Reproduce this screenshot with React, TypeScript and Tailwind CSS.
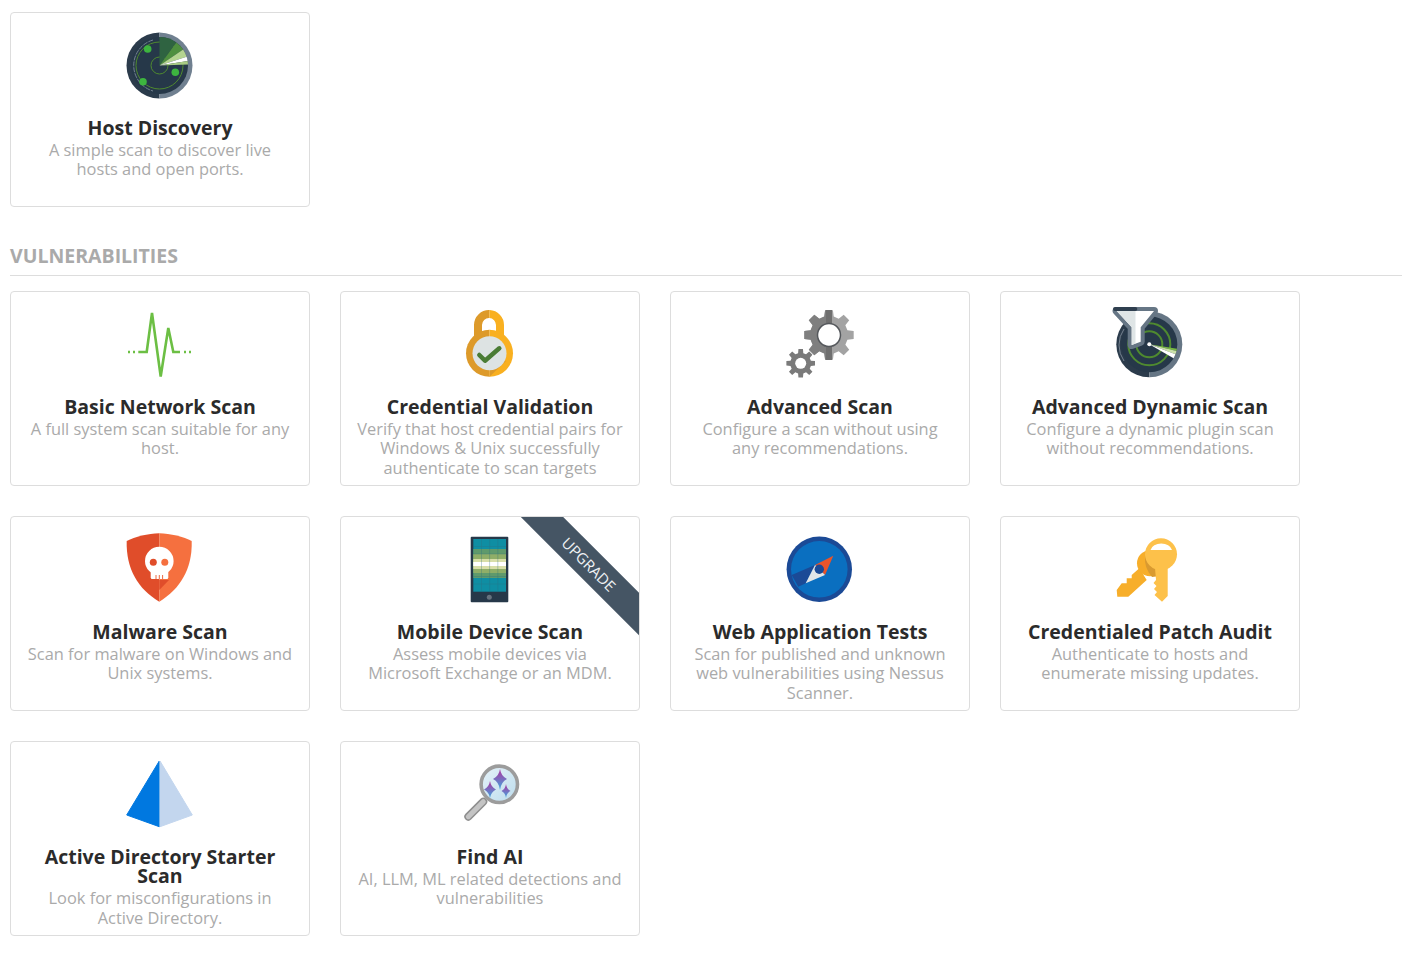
import type { ReactNode } from 'react';

// polar helpers for the radar wedges and gears, angle 0 is straight up
const pt = (cx: number, cy: number, r: number, deg: number) => {
  const a = (deg * Math.PI) / 180;
  return `${(cx + r * Math.sin(a)).toFixed(2)} ${(cy - r * Math.cos(a)).toFixed(2)}`;
};

const wedge = (cx: number, cy: number, r: number, a1: number, a2: number) =>
  `M${cx} ${cy}L${pt(cx, cy, r, a1)}A${r} ${r} 0 0 1 ${pt(cx, cy, r, a2)}Z`;

const gear = (cx: number, cy: number, ro: number, ri: number, teeth: number) => {
  const step = 360 / teeth;
  let d = '';
  for (let i = 0; i < teeth; i++) {
    const a = i * step;
    d += `${i === 0 ? 'M' : 'L'}${pt(cx, cy, ri, a - step * 0.32)}L${pt(cx, cy, ro, a - step * 0.2)}L${pt(cx, cy, ro, a + step * 0.2)}L${pt(cx, cy, ri, a + step * 0.32)}`;
  }
  return d + 'Z';
};

const HostIcon = () => (
  <>
    <path d="M39.5 2.5a33 33 0 0 0 0 66z" fill="#2b3b4b" />
    <path d="M39.5 2.5a33 33 0 0 1 0 66z" fill="#708090" />
    <circle cx="39.5" cy="35.5" r="28.5" fill="#263849" />
    <circle cx="39.5" cy="35.5" r="23.5" fill="none" stroke="#4f8a2f" strokeWidth="1" />
    <circle cx="39.5" cy="35.5" r="8.5" fill="none" stroke="#4f8a2f" strokeWidth="1" />
    <path d={wedge(39.5, 35.5, 28.5, 0, 36)} fill="#2f6341" />
    <path d={wedge(39.5, 35.5, 28.5, 36, 56)} fill="#4f8f3f" />
    <path d={wedge(39.5, 35.5, 28.5, 56, 72)} fill="#b5d490" />
    <path d={wedge(39.5, 35.5, 28.5, 72, 81)} fill="#ffffff" />
    <path d={wedge(39.5, 35.5, 28.5, 81, 88)} fill="#a9cc84" />
    <path d="M33 10a26.5 26.5 0 0 0 0 51" fill="none" stroke="#93a1ad" strokeWidth="0.7" strokeDasharray="5 1" />
    <circle cx="27.7" cy="19" r="3.8" fill="#3db53f" />
    <circle cx="55.3" cy="42.3" r="3.8" fill="#3db53f" />
    <circle cx="23" cy="51.7" r="3.8" fill="#3db53f" />
  </>
);

const PulseIcon = () => (
  <>
    <path d="M18.3 43H26.7L32 4L40.7 67.5L48.3 19L53.3 43H60" fill="none" stroke="#6cbf44" strokeWidth="2.6" />
    <path d="M8 43h2M13 43h2M64 43h2M69 43h2" fill="none" stroke="#6cbf44" strokeWidth="2.4" />
  </>
);

const LockIcon = () => (
  <>
    <path d="M28 30V16a11 11 0 0 1 11.5-11" fill="none" stroke="#dd9a2a" strokeWidth="8" />
    <path d="M39.5 5a11 11 0 0 1 10.5 11V30" fill="none" stroke="#f9b020" strokeWidth="8" />
    <path d="M39.5 20.8a23.5 23.5 0 0 0 0 47z" fill="#dd9a2a" />
    <path d="M39.5 20.8a23.5 23.5 0 0 1 0 47z" fill="#f9b020" />
    <path d="M39.5 67.8L56 52L39.5 50z" fill="#dd9a2a" />
    <circle cx="39.5" cy="44.3" r="17" fill="#dde3e3" />
    <path d="M29.3 46L35 51.7L49.3 39.3" fill="none" stroke="#4a7c35" strokeWidth="4.5" strokeLinecap="round" strokeLinejoin="round" />
  </>
);

const GearsIcon = () => (
  <>
    <clipPath id="gear-left">
      <rect x="0" y="0" width="49" height="72" />
    </clipPath>
    <path d={gear(49, 26, 25, 19, 8)} fill="#a3a3a3" />
    <path d={gear(49, 26, 25, 19, 8)} fill="#7f7f7f" clipPath="url(#gear-left)" />
    <rect x="46" y="1" width="6" height="14" fill="#6f6f6f" />
    <rect x="46" y="37" width="6" height="14" fill="#6f6f6f" />
    <circle cx="49" cy="26" r="11.5" fill="#fff" stroke="#55585c" strokeWidth="1.5" />
    <path d={gear(20.7, 54.3, 14.5, 10.5, 8)} fill="#7a7a7a" />
    <circle cx="20.7" cy="54.3" r="5.5" fill="#fff" />
  </>
);

const DynamicIcon = () => (
  <>
    <path d="M39.3 2.3a33 33 0 0 0 0 66z" fill="#2b3b4b" />
    <path d="M39.3 2.3a33 33 0 0 1 0 66z" fill="#667685" />
    <circle cx="39.3" cy="35.3" r="28" fill="#263849" />
    <circle cx="39.3" cy="35.3" r="13" fill="none" stroke="#4f8a2f" strokeWidth="2" />
    <circle cx="39.3" cy="35.3" r="21" fill="none" stroke="#4f8a2f" strokeWidth="2" />
    <path d={wedge(39.3, 35.3, 28, 99, 104)} fill="#78b843" />
    <path d={wedge(39.3, 35.3, 28, 104, 111)} fill="#c9e0a8" />
    <path d={wedge(39.3, 35.3, 28, 111, 120)} fill="#ffffff" />
    <circle cx="39.3" cy="35.3" r="2" fill="#fff" />
    <path d="M14 20a28 28 0 0 0 0 32" fill="none" stroke="#93a1ad" strokeWidth="0.7" />
    <path d="M6.7 2H44L30.7 18.3V32.7L21.7 36V18.3z" fill="#667685" stroke="#667685" strokeWidth="8" strokeLinejoin="round" />
    <path d="M5 0H25.3" stroke="#2f3f4f" strokeWidth="4" strokeLinecap="round" />
    <path d="M6.7 2H44L30.7 18.3V32.7L21.7 36V18.3z" fill="#ffffff" />
    <path d="M6.7 2H25.5V34.4L21.7 36V18.3z" fill="#dfe5e6" />
  </>
);

const ShieldIcon = () => (
  <>
    <path d="M39.3 -.7C28 -.7 15 3 6.7 7C6 35 18 55 39.3 67.7z" fill="#e04d2a" />
    <path d="M39.3 -.7C50 -.7 64 3 71.7 7C72.5 35 60 55 39.3 67.7z" fill="#f5703f" />
    <path d="M39.3 56V46H49z" fill="#e04d2a" />
    <circle cx="39.3" cy="27" r="14.3" fill="#fff" />
    <rect x="30.7" y="34" width="17.6" height="11" rx="1.5" fill="#fff" />
    <circle cx="33.3" cy="28.3" r="3.5" fill="#e04d2a" />
    <circle cx="44.8" cy="28.3" r="3.5" fill="#f5703f" />
    <path d="M36 41v4M39.3 41v4M42.6 41v4" stroke="#e8592f" strokeWidth="0.9" />
  </>
);

const PhoneIcon = () => (
  <>
    <rect x="20.7" y="2.7" width="37.6" height="65.6" rx="1" fill="#263849" />
    <rect x="23.3" y="5" width="32.7" height="52.7" fill="#0f8ea3" />
    <rect x="23.3" y="15" width="32.7" height="29" fill="#5f9a6c" />
    <rect x="23.3" y="20" width="32.7" height="19" fill="#8fae68" />
    <rect x="23.3" y="25" width="32.7" height="10" fill="#d8dea8" />
    <rect x="23.3" y="28" width="32.7" height="4" fill="#ffffff" />
    <path d="M31.5 5V57.7M39.6 5V57.7M47.8 5V57.7M23.3 12.5H56M23.3 20H56M23.3 42.5H56M23.3 50H56" stroke="#2f6f80" strokeWidth="0.5" opacity="0.6" />
    <circle cx="39.3" cy="63.3" r="2.5" fill="#66727e" />
  </>
);

const CompassIcon = () => (
  <>
    <circle cx="39.3" cy="35.3" r="32.7" fill="#1b4a96" />
    <circle cx="39.3" cy="35.3" r="28.3" fill="#0a6fc0" />
    <path d="M35 31L11.7 41L18.3 52.7L25.7 49.3z" fill="#1b4a96" />
    <path d="M53.3 21.7L35 31L45 41z" fill="#e8542a" />
    <path d="M25.7 49.3L35 31L45 41z" fill="#e3e6e8" />
    <circle cx="39.3" cy="35.3" r="4.7" fill="#1b4a96" />
  </>
);

const KeysIcon = () => (
  <>
    <path d="M29.3 34.3L21.7 41V44.3H16.7V49.3H11.7L6.7 56L7.3 62.7H18.3L36.7 46z" fill="#f7ae2a" />
    <circle cx="40" cy="29.3" r="13" fill="#f7ae2a" />
    <path d="M35 22a13 13 0 0 1 10 0L50 42L42 43Q34 34 35 22z" fill="#d99a30" />
    <path d="M45 34H57.7V62L52 67.7L44.5 61L47 58L44 55L46.5 52L43.5 49L46 46z" fill="#fdc14a" />
    <circle cx="51" cy="20.3" r="16" fill="#fdc14a" />
    <path d="M40.5 16a11 8.2 0 0 1 21.5 0z" fill="#fff" />
  </>
);

const PyramidIcon = () => (
  <>
    <path d="M39.3 2L6.7 56L39.3 67.7z" fill="#0078e0" stroke="#0078e0" strokeWidth="1" strokeLinejoin="round" />
    <path d="M40 2L72.3 56L40 67.7z" fill="#c3d6ee" stroke="#c3d6ee" strokeWidth="1" strokeLinejoin="round" />
  </>
);

const SparkIcon = () => (
  <>
    <defs>
      <linearGradient id="spark" x1="0" y1="0" x2="0" y2="1">
        <stop offset="0" stopColor="#b0339f" />
        <stop offset="1" stopColor="#3fa9e0" />
      </linearGradient>
      <linearGradient id="lens" x1="0" y1="0" x2="1" y2="1">
        <stop offset="0" stopColor="#e6f2f9" />
        <stop offset="1" stopColor="#bcdcec" />
      </linearGradient>
    </defs>
    <path d="M33.3 42.7L18.3 57.7" stroke="#8f8f8f" strokeWidth="8" strokeLinecap="round" />
    <path d="M33.3 42.7L18.3 57.7" stroke="#c4c4c4" strokeWidth="5" strokeLinecap="round" />
    <circle cx="49.3" cy="25.3" r="18.2" fill="url(#lens)" stroke="#9c9c9c" strokeWidth="3.6" />
    <path d="M50 10Q51 17 57 20Q51 23 50 31Q49 23 43 20Q49 17 50 10z" fill="url(#spark)" />
    <path d="M40 22Q41 28 46 30.5Q41 33 40 39Q39 33 34 30.5Q39 28 40 22z" fill="url(#spark)" />
    <path d="M56 25Q56.6 30 60.5 32Q56.6 34 56 39Q55.4 34 51.5 32Q55.4 30 56 25z" fill="url(#spark)" />
  </>
);

function ScanCard({ icon, title, desc, upgrade }: { icon: ReactNode; title: string; desc: string; upgrade?: boolean }) {
  return (
    <div className="relative h-[195px] w-[300px] overflow-hidden rounded-[4px] border border-[#dddddd] bg-white px-[15.75px] pt-[17px] text-center">
      {upgrade && (
        <div className="absolute left-[148px] top-[32px] flex h-[30px] w-[200px] rotate-45 items-center justify-center bg-[#455564] text-[15px] text-[#eef1f3]">
          UPGRADE
        </div>
      )}
      <svg viewBox="0 0 80 72" className="relative mx-auto block h-[72px] w-[80px] overflow-visible">
        {icon}
      </svg>
      <div className="relative mt-[15.6px] text-[19.5px] font-bold leading-[19.5px] text-[#2b2b2b]">{title}</div>
      <div className="relative mt-[2.5px] text-[16.4px] leading-[19.5px] text-[#aaaaaa]">{desc}</div>
    </div>
  );
}

export default function App() {
  return (
    <div className="min-h-screen bg-white pt-[12px] pl-[10px] font-['Open_Sans',sans-serif]">
      <ScanCard
        icon={<HostIcon />}
        title="Host Discovery"
        desc="A simple scan to discover live hosts and open ports."
      />

      <div className="mt-[37px] border-b border-[#dddddd] pb-[7px] text-[19.5px] font-bold leading-[24px] text-[#aaaaaa]">
        VULNERABILITIES
      </div>

      <div className="mt-[15px] grid grid-cols-[repeat(4,300px)] gap-[30px]">
        <ScanCard icon={<PulseIcon />} title="Basic Network Scan" desc="A full system scan suitable for any host." />
        <ScanCard
          icon={<LockIcon />}
          title="Credential Validation"
          desc="Verify that host credential pairs for Windows & Unix successfully authenticate to scan targets"
        />
        <ScanCard icon={<GearsIcon />} title="Advanced Scan" desc="Configure a scan without using any recommendations." />
        <ScanCard
          icon={<DynamicIcon />}
          title="Advanced Dynamic Scan"
          desc="Configure a dynamic plugin scan without recommendations."
        />
        <ScanCard icon={<ShieldIcon />} title="Malware Scan" desc="Scan for malware on Windows and Unix systems." />
        <ScanCard
          icon={<PhoneIcon />}
          title="Mobile Device Scan"
          desc="Assess mobile devices via Microsoft Exchange or an MDM."
          upgrade
        />
        <ScanCard
          icon={<CompassIcon />}
          title="Web Application Tests"
          desc="Scan for published and unknown web vulnerabilities using Nessus Scanner."
        />
        <ScanCard
          icon={<KeysIcon />}
          title="Credentialed Patch Audit"
          desc="Authenticate to hosts and enumerate missing updates."
        />
        <ScanCard
          icon={<PyramidIcon />}
          title="Active Directory Starter Scan"
          desc="Look for misconfigurations in Active Directory."
        />
        <ScanCard icon={<SparkIcon />} title="Find AI" desc="AI, LLM, ML related detections and vulnerabilities" />
      </div>
    </div>
  );
}
